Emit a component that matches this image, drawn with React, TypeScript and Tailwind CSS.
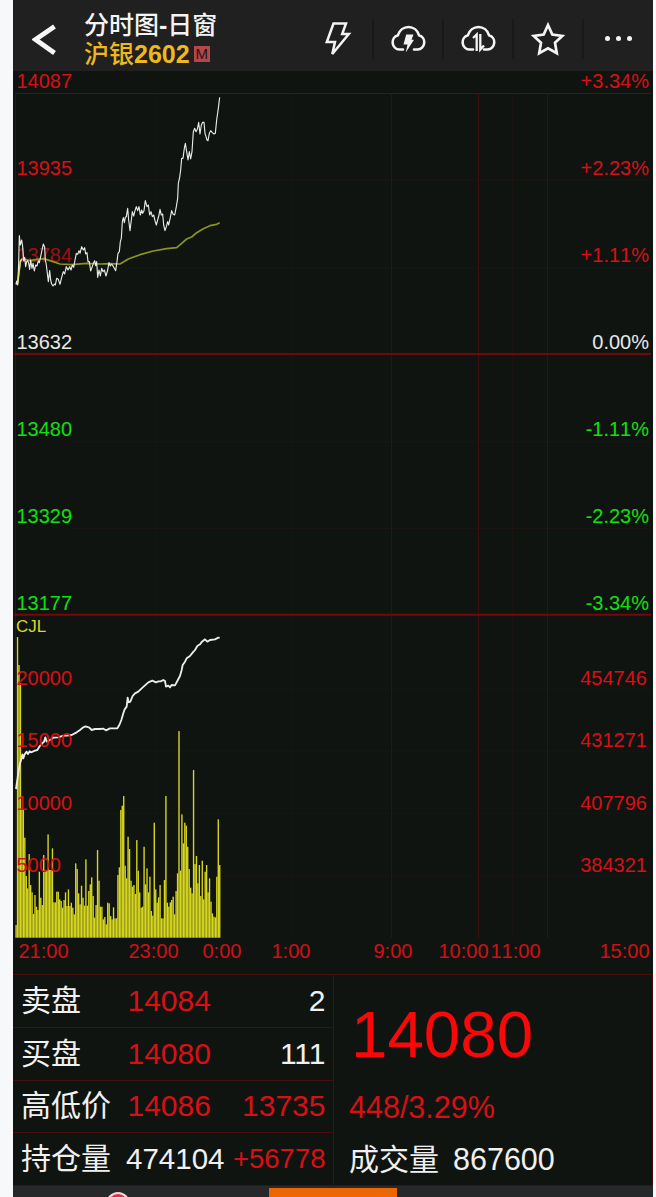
import React from "react";

const PRICE_LINE =
  "48,583 50,573 53,585 56,520 58,437 61,465 65,450 68,470 71,512 74,502 77,530 80,515 83,512 86,520 89,538 92,510 96,535 99,520 103,543 107,525 111,528 115,512 118,518 122,500 126,480 130,462 134,472 136,510 139,525 142,550 145,575 149,542 152,570 155,582 159,588 163,582 166,585 170,565 175,568 180,583 185,562 190,545 194,552 199,530 204,540 209,530 213,540 217,525 221,532 225,510 229,490 233,493 237,482 240,490 245,470 250,480 254,473 257,492 261,488 264,515 268,515 272,543 276,532 280,520 284,512 287,527 290,515 293,562 297,540 301,558 305,535 309,545 313,540 318,558 323,540 327,518 331,528 335,522 339,528 343,535 347,542 351,515 354,490 358,485 361,455 364,445 367,395 370,383 373,398 376,382 379,380 383,355 386,390 390,422 394,390 397,365 401,378 405,362 409,350 413,362 417,350 421,375 425,360 428,370 432,362 436,332 441,350 445,345 449,375 453,365 457,380 461,375 465,392 469,405 473,390 477,375 480,358 484,375 488,372 491,405 495,422 499,410 503,395 506,405 511,382 515,362 519,372 524,375 529,350 533,325 535,280 539,262 542,240 545,205 549,205 553,175 556,160 560,185 564,210 568,185 572,207 576,185 580,125 584,115 588,125 592,118 596,97 600,132 604,105 608,97 612,97 615,130 618,140 621,150 624,152 628,130 632,122 637,128 642,132 646,130 650,90 655,55 659,22";

const AVERAGE_LINE =
  "48,583 53,580 58,540 61,515 65,507 75,508 90,512 110,508 130,506 150,512 180,522 215,524 260,520 300,522 330,521 360,522 385,507 420,494 460,483 500,476 530,473 545,460 560,447 575,441 590,428 610,416 630,407 650,403 659,398";

const OPEN_INTEREST_LINE =
  "48,567 52,540 56,512 60,490 64,478 67,463 70,475 74,463 80,455 84,462 89,454 93,457 98,455 105,452 112,450 118,440 125,432 132,425 136,412 140,425 150,420 160,413 175,412 190,407 200,407 215,405 230,397 240,390 250,382 257,379 268,383 275,390 285,387 300,387 310,386 318,391 330,385 340,385 352,385 358,375 364,360 370,340 374,328 380,320 383,293 386,307 391,305 398,288 405,280 415,275 425,265 435,256 445,247 457,242 468,247 475,244 482,244 490,240 495,243 498,260 505,257 510,262 515,255 525,256 532,243 540,228 545,210 548,195 555,185 560,175 570,168 578,158 585,150 592,138 600,133 606,125 615,118 622,125 630,120 645,118 655,113 659,113";

// Bar heights in thirds of a pixel, one per minute.
const VOLUMES = [
  38, 902, 818, 764, 383, 383, 300, 185, 148, 251, 158, 136, 71, 128, 93, 83, 198, 120, 98, 248,
  203, 203, 310, 203, 203, 268, 106, 106, 138, 138, 115, 110, 90, 113, 136, 95, 145, 95, 105, 90,
  70, 223, 206, 133, 100, 156, 120, 96, 235, 96, 140, 160, 181, 125, 60, 98, 263, 171, 93, 93, 55,
  62, 40, 105, 103, 65, 55, 91, 58, 58, 188, 211, 383, 396, 425, 216, 178, 303, 266, 171, 153, 158,
  131, 293, 201, 136, 90, 93, 273, 160, 208, 136, 183, 80, 66, 345, 145, 105, 121, 158, 58, 58, 173,
  425, 105, 93, 106, 113, 123, 70, 140, 193, 620, 201, 370, 283, 345, 336, 273, 206, 150, 133, 503,
  221, 245, 163, 218, 125, 231, 115, 198, 218, 136, 178, 108, 73, 63, 61, 183, 355, 218,
];

const PRICE_ROWS = [
  { price: "14087", pct: "+3.34%", tone: "text-[#d80f14]" },
  { price: "13935", pct: "+2.23%", tone: "text-[#d80f14]" },
  { price: "13784", pct: "+1.11%", tone: "text-[#d80f14]" },
  { price: "13632", pct: "0.00%", tone: "text-[#e8e8e8]" },
  { price: "13480", pct: "-1.11%", tone: "text-[#10e010]" },
  { price: "13329", pct: "-2.23%", tone: "text-[#10e010]" },
  { price: "13177", pct: "-3.34%", tone: "text-[#10e010]" },
];

const VOLUME_ROWS = [
  ["20000", "454746"],
  ["15000", "431271"],
  ["10000", "407796"],
  ["5000", "384321"],
];

const TIMES = ["21:00", "23:00", "0:00", "1:00", "9:00", "10:00", "11:00", "15:00"];

function VerticalGrid({ top, bottom }: { top: number; bottom: number }) {
  return (
    <g>
      {[2.5, 378.5, 465.5, 534.5].map((x) => (
        <line key={x} x1={x} x2={x} y1={top} y2={bottom} stroke="#3a0f0e" />
      ))}
      {[142.5, 278.5, 499.5].map((x) => (
        <line key={x} x1={x} x2={x} y1={top} y2={bottom} stroke="#1a1311" />
      ))}
    </g>
  );
}

function CloudOutline() {
  return (
    <path
      d="M13 24.500H9.500a7.300 7.300 0 0 1-1.600-14.300C9.400 5.300 13.700 2 18.500 2s9.100 3.300 10.500 8.200a7.300 7.300 0 0 1-1.500 14.300H24"
      fill="none"
      stroke="#f4f4f4"
      strokeWidth="2.600"
      strokeLinecap="round"
    />
  );
}

function Header() {
  const cell = "flex h-10 w-[70px] shrink-0 items-center justify-center border-r-2 border-[#191919]";
  return (
    <header className="flex h-[71px] items-center bg-[#202020]">
      <svg className="ml-[19px] h-[34px] w-[26px] shrink-0 translate-y-[3px]" viewBox="0 0 26 34" fill="none">
        <path d="M22.500 4.500 3.500 17.500 22.500 31" stroke="#f6f6f6" strokeWidth="4.800" />
      </svg>
      <div className="ml-[26px] w-[220px] shrink-0 pt-[8px] text-[25px] leading-[29px]">
        <div className="h-[29px] font-medium text-[#f4f4f4]">
          分时图<b>-</b>日窗
        </div>
        <div className="flex items-center font-medium text-[#edb91c]">
          沪银<b>2602</b>
          <span className="ml-[4px] flex h-4 w-4 items-center justify-center bg-[#b54748] text-[15px] leading-4 text-[#211516]">
            M
          </span>
        </div>
      </div>
      <div className="flex pt-[6px]">
        <div className={cell}>
          <svg width="28" height="36" viewBox="0 0 28 36" fill="none">
            <path
              d="M9.500 2.500H22L18.200 13H24.800L8.300 33 11 21H2.800Z"
              stroke="#f4f4f4"
              strokeWidth="2.500"
            />
          </svg>
        </div>
        <div className={cell}>
          <svg width="37" height="28" viewBox="0 0 37 28">
            <CloudOutline />
            <path d="M16.200 9.500H23.500L21.500 14.700H24L15.800 27.500 17.500 19.500H13.500Z" fill="#f4f4f4" />
          </svg>
        </div>
        <div className={cell}>
          <svg width="37" height="28" viewBox="0 0 37 28">
            <CloudOutline />
            <path
              d="M13 13 16.700 9.500V26M20.300 9V24.500L24 20.500"
              fill="none"
              stroke="#f4f4f4"
              strokeWidth="2.300"
            />
          </svg>
        </div>
        <div className={cell}>
          <svg width="38" height="36" viewBox="0 0 38 36" fill="none">
            <path
              d="M19 4 23.300 13.600 33.300 14.900 26 21.800 27.800 32.200 19 27.300 10.200 32.200 12 21.800 4.700 14.900 14.700 13.600Z"
              stroke="#f4f4f4"
              strokeWidth="2.700"
            />
          </svg>
        </div>
        <div className="flex h-10 w-[68px] items-center justify-center gap-[6px]">
          <i className="h-[5px] w-[5px] rounded-full bg-[#f4f4f4]" />
          <i className="h-[5px] w-[5px] rounded-full bg-[#f4f4f4]" />
          <i className="h-[5px] w-[5px] rounded-full bg-[#f4f4f4]" />
        </div>
      </div>
    </header>
  );
}

function PricePanel() {
  return (
    <section className="relative h-[544px] text-[20px] leading-5 [font-kerning:none]">
      {PRICE_ROWS.map((row, i) => (
        <div
          key={row.price}
          className={`flex items-end justify-between pr-[4px] pb-[2px] pl-[3.500px] ${i === 0 ? "h-[22px]" : "h-[87px]"} ${row.tone}`}
        >
          <span className={row.price === "13784" ? "opacity-70" : ""}>{row.price}</span>
          <span>{row.pct}</span>
        </div>
      ))}
      <svg className="absolute inset-0" width="640" height="544" viewBox="0 0 640 544" fill="none">
        <VerticalGrid top={22} bottom={544} />
        {[109.5, 196.5, 370.5, 457.5].map((y) => (
          <line key={y} x1="60" x2="638" y1={y} y2={y} stroke="#301210" strokeDasharray="1.500 2.500" />
        ))}
        <line x1="2" x2="638" y1="22.500" y2="22.500" stroke="#5c0c0c" />
        <line x1="1" x2="638" y1="283" y2="283" stroke="#780609" strokeWidth="1.800" />
        <line x1="1" x2="638" y1="543.500" y2="543.500" stroke="#780609" strokeWidth="1.500" />
        <g transform="translate(-13 19) scale(.33333)" strokeLinejoin="round">
          <polyline points={AVERAGE_LINE} stroke="#8a9421" strokeWidth="5" />
          <polyline points={PRICE_LINE} stroke="#e9ebe9" strokeWidth="3.400" />
          <path d="M53 580 58 540 61 515 65 507" stroke="#dfe07a" strokeWidth="4" />
        </g>
      </svg>
    </section>
  );
}

function VolumePanel() {
  return (
    <section className="relative h-[323px] text-[20px] leading-5 text-[#d80f14] [font-kerning:none]">
      <svg className="absolute inset-0" width="640" height="323" viewBox="0 0 640 323" fill="none">
        <VerticalGrid top={0} bottom={323} />
        {[74.5, 136.5, 198.5, 261.5].map((y) => (
          <line key={y} x1="60" x2="638" y1={y} y2={y} stroke="#281210" strokeDasharray="1.500 2.500" />
        ))}
        <line x1="1" x2="638" y1=".250" y2=".250" stroke="#780609" />
        <g transform="translate(-13 322.700) scale(.33333)">
          {VOLUMES.map((v, i) => (
            <rect key={i} x={46.2 + i * 4.364} y={-v} width="4.100" height={v} fill="#d8d820" />
          ))}
        </g>
        <polyline
          points={OPEN_INTEREST_LINE}
          transform="translate(-13 -15) scale(.33333)"
          stroke="#ececea"
          strokeWidth="5.500"
          strokeLinejoin="round"
        />
      </svg>
      <div className="relative">
        <div className="h-[10px] pl-[3px] text-[17px] leading-[23px] text-[#d9d92a]">CJL</div>
        {VOLUME_ROWS.map(([volume, interest]) => (
          <div key={volume} className="flex h-[62.500px] items-end justify-between pr-[6px] pl-[3.500px]">
            <span>{volume}</span>
            <span>{interest}</span>
          </div>
        ))}
      </div>
    </section>
  );
}

function TimeAxis() {
  return (
    <div className="grid h-[36px] grid-cols-[110px_74px_69px_102px_65px_52px_109px_50px] pt-[3px] pl-[5.500px] text-[20px] leading-5 text-[#d01014] [font-kerning:none]">
      {TIMES.map((t) => (
        <span key={t} className="whitespace-nowrap">{t}</span>
      ))}
    </div>
  );
}

function QuoteRow({
  label,
  value,
  extra,
  valueClass = "text-[30px] text-[#d80f14] pl-[1.500px]",
  extraClass = "text-[30px] text-[#f0f0f0]",
}: {
  label: string;
  value: string;
  extra: string;
  valueClass?: string;
  extraClass?: string;
}) {
  return (
    <div className="flex flex-1 items-center border-b border-[#480e0c] pr-[7.500px] pl-[8px] leading-none">
      <span className="w-[105px] shrink-0 text-[30px] text-[#f0f0f0]">{label}</span>
      <span className={`whitespace-nowrap ${valueClass}`}>{value}</span>
      <span className={`ml-auto whitespace-nowrap ${extraClass}`}>{extra}</span>
    </div>
  );
}

function QuotePanel() {
  return (
    <section className="flex h-[212px] border-t border-r border-[#480e0c]">
      <div className="flex w-[321px] flex-col border-r border-[#480e0c]">
        <QuoteRow label="卖盘" value="14084" extra="2" />
        <QuoteRow label="买盘" value="14080" extra="111" />
        <QuoteRow label="高低价" value="14086" extra="13735" extraClass="text-[30px] text-[#d80f14]" />
        <QuoteRow
          label="持仓量"
          value="474104"
          extra="+56778"
          valueClass="text-[29.500px] text-[#f0f0f0]"
          extraClass="text-[27.500px] text-[#d80f14]"
        />
      </div>
      <div className="flex flex-1 flex-col border-b border-[#480e0c] pl-[15px] leading-none">
        <div className="h-[106px] pt-[27px] pl-[2px] text-[65.500px] text-[#f80808]">14080</div>
        <div className="flex h-[53px] items-center text-[30.500px] text-[#d80f14]">448/3.29%</div>
        <div className="flex flex-1 items-center text-[30px] text-[#f0f0f0]">
          成交量<span className="ml-[14px] text-[30.500px]">867600</span>
        </div>
      </div>
    </section>
  );
}

function BottomBar() {
  return (
    <footer className="flex h-[11px] overflow-hidden bg-[#27282a]">
      <div className="w-[256px] pt-[6px] pl-[93px]">
        <div className="h-6 w-6 rounded-full border-2 border-[#f3d9dc] bg-[#d9344c]" />
      </div>
      <div className="mt-[2px] w-[128px] bg-[#ec6700]" />
    </footer>
  );
}

export default function App() {
  return (
    <div className="h-[1197px] w-[656px] overflow-hidden bg-[#f7f8fa] pl-[13px] font-['Liberation_Sans','Noto_Sans_CJK_SC',sans-serif]">
      <main className="w-[640px] bg-[#101410]">
        <Header />
        <PricePanel />
        <VolumePanel />
        <TimeAxis />
        <QuotePanel />
        <BottomBar />
      </main>
    </div>
  );
}
